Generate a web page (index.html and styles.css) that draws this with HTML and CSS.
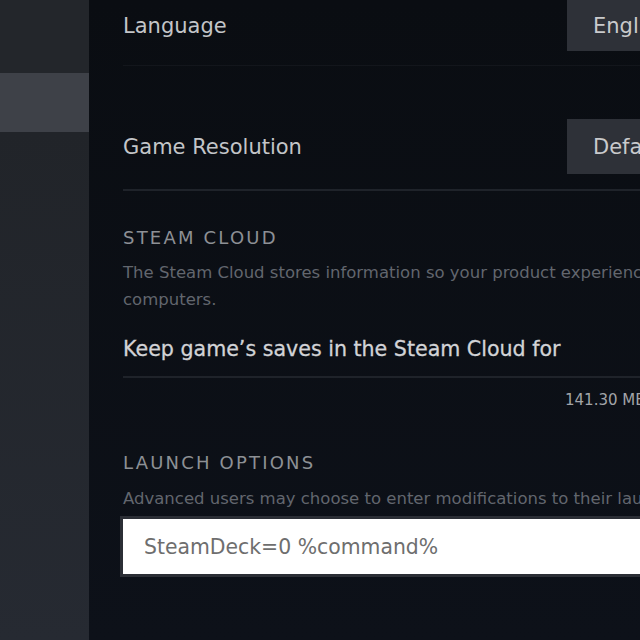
FILE: index.html
```html
<!DOCTYPE html>
<html lang="en">
<head>
<meta charset="utf-8">
<title>Properties</title>
<link rel="stylesheet" href="styles.css">
</head>
<body>
<div class="app">
  <nav class="sidebar">
    <div class="nav-item"></div>
    <div class="nav-item active"></div>
    <div class="nav-fill"></div>
  </nav>
  <main class="main">
    <div class="column">
      <div class="row row-first">
        <span class="label">Language</span>
        <div class="dropdown">English</div>
      </div>
      <div class="rule rule-faint"></div>
      <div class="row row-second">
        <span class="label">Game Resolution</span>
        <div class="dropdown">Default</div>
      </div>
      <div class="rule rule-mid"></div>

      <h2 class="section-title title-cloud">STEAM CLOUD</h2>
      <p class="desc desc-cloud">The Steam Cloud stores information so your product experience is consistent across computers.</p>
      <div class="toggle-label">Keep game’s saves in the Steam Cloud for</div>
      <div class="rule rule-low"></div>
      <div class="usage">141.30 MB</div>

      <h2 class="section-title title-launch">LAUNCH OPTIONS</h2>
      <p class="desc desc-launch">Advanced users may choose to enter modifications to their launch options.</p>
      <div class="input-box"><span class="input-text">SteamDeck=0 %command%</span></div>
    </div>
  </main>
</div>
</body>
</html>
```

FILE: styles.css
```css
html, body {
  margin: 0;
  padding: 0;
  width: 640px;
  height: 640px;
  overflow: hidden;
  background: #0b0e14;
  font-family: "DejaVu Sans", "Liberation Sans", sans-serif;
}

.app {
  display: flex;
  width: 640px;
  height: 640px;
}

.sidebar {
  width: 89px;
  flex: none;
  display: flex;
  flex-direction: column;
  background: #22252b;
}

.nav-item {
  height: 73px;
  background: #23262b;
}

.nav-item.active {
  height: 59px;
  background: #3e4148;
}

.nav-fill {
  flex: 1;
  background: linear-gradient(#212429, #262a32);
}

.main {
  flex: 1;
  padding-left: 34px;
  overflow: hidden;
  background: linear-gradient(#0a0d12, #0d1119);
}

.column {
  width: 600px;
  display: flex;
  flex-direction: column;
}

.row {
  display: flex;
  align-items: center;
  justify-content: space-between;
}

.row-first {
  height: 51px;
}

.row-second {
  height: 55px;
  margin-top: 53px;
}

.label {
  font-size: 21px;
  color: #c3c5c8;
}

.dropdown {
  align-self: stretch;
  width: 156px;
  box-sizing: border-box;
  padding-left: 26px;
  display: flex;
  align-items: center;
  background: #2e3138;
  color: #c9cacc;
  font-size: 21px;
}

.rule {
  height: 2px;
  background: #1f232a;
}

.rule-faint {
  height: 1px;
  margin-top: 14px;
  background: #13161c;
}

.rule-mid {
  margin-top: 15px;
}

.rule-low {
  margin-top: 13px;
}

.section-title {
  margin: 0;
  font-size: 18px;
  line-height: 24px;
  font-weight: 500;
  letter-spacing: 2.2px;
  color: #8d9095;
}

.title-cloud {
  margin-top: 35px;
}

.title-launch {
  margin-top: 41px;
}

.desc {
  margin: 0;
  font-size: 16.5px;
  line-height: 27px;
  color: #62666e;
}

.desc-cloud {
  margin-top: 9px;
  width: 730px;
}

.desc-launch {
  margin-top: 12px;
  line-height: 24px;
  white-space: nowrap;
}

.toggle-label {
  margin-top: 22px;
  font-size: 20.6px;
  line-height: 28px;
  color: #d2d3d6;
  -webkit-text-stroke: 0.3px #d2d3d6;
}

.usage {
  margin-top: 12px;
  padding-left: 442px;
  font-size: 15px;
  line-height: 20px;
  color: #a2a4a8;
}

.input-box {
  margin-top: 5px;
  height: 55px;
  display: flex;
  align-items: center;
  padding-left: 21px;
  background: #ffffff;
  border: 3px solid #2b2e35;
  border-right: none;
  margin-left: -3px;
}

.input-text {
  font-size: 20.4px;
  color: #6e6e6e;
}
```
